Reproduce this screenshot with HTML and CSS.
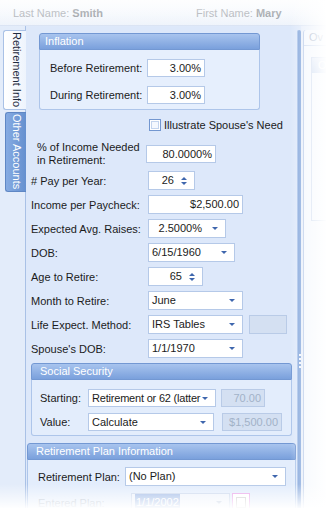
FILE: index.html
```html
<!DOCTYPE HTML>
<html lang="en-us">
	<head>
		<meta charset="utf-8">
		<meta name="viewport" content="initial-scale=1.0">
		<title>Retirement Info</title>
		<link rel="stylesheet" href="styles.css">
	</head>
	<body>
		<div class="screen">

			<header class="names">
				<span class="name last">Last Name: <b>Smith</b></span>
				<span class="name">First Name: <b>Mary</b></span>
			</header>

			<div class="workspace">

				<nav class="tabs">
					<div class="tab active">Retirement Info</div>
					<div class="tab">Other Accounts</div>
				</nav>

				<main class="form">

					<section class="group inflation">
						<h2 class="group-title">Inflation</h2>
						<div class="group-body">
							<div class="row"><label>Before Retirement:</label><div class="field num w58">3.00%</div></div>
							<div class="row"><label>During Retirement:</label><div class="field num w58">3.00%</div></div>
						</div>
					</section>

					<div class="check-row"><span class="check"></span>Illustrate Spouse's Need</div>

					<div class="fields">
						<div class="row pct"><label>% of Income Needed<br>in Retirement:</label><div class="field num w70">80.0000%</div></div>
						<div class="row"><label># Pay per Year:</label><div class="field spinner w47">26<span class="spin"><i class="up"></i><i class="down"></i></span></div></div>
						<div class="row"><label>Income per Paycheck:</label><div class="field num w95">$2,500.00</div></div>
						<div class="row"><label>Expected Avg. Raises:</label><div class="field combo right w78"><span>2.5000%</span></div></div>
						<div class="row"><label>DOB:</label><div class="field combo w87"><span>6/15/1960</span></div></div>
						<div class="row"><label>Age to Retire:</label><div class="field spinner w55">65<span class="spin"><i class="up"></i><i class="down"></i></span></div></div>
						<div class="row"><label>Month to Retire:</label><div class="field combo w95"><span>June</span></div></div>
						<div class="row"><label>Life Expect. Method:</label><div class="field combo w95"><span>IRS Tables</span></div><div class="field off w38"></div></div>
						<div class="row"><label>Spouse's DOB:</label><div class="field combo w95"><span>1/1/1970</span></div></div>
					</div>

					<section class="group social">
						<h2 class="group-title">Social Security</h2>
						<div class="group-body">
							<div class="row"><label>Starting:</label><div class="field combo w128"><span class="tight">Retirement or 62 (latter</span></div><div class="field off num w44">70.00</div></div>
							<div class="row"><label>Value:</label><div class="field combo w126"><span>Calculate</span></div><div class="field off num w60 gap8">$1,500.00</div></div>
						</div>
					</section>

					<section class="group plan">
						<h2 class="group-title">Retirement Plan Information</h2>
						<div class="group-body">
							<div class="row"><label>Retirement Plan:</label><div class="field combo w161"><span>(No Plan)</span></div></div>
							<div class="row disabled"><label>Entered Plan:</label><div class="field combo date w99"><span class="sel">1/1/2002</span></div><div class="cal"></div></div>
						</div>
					</section>

				</main>

				<div class="splitter"><span class="grip"></span></div>

				<aside class="side">
					<div class="side-panel">
						<div class="side-tab">Ov</div>
						<div class="side-box"><div class="side-box-title">O</div></div>
					</div>
				</aside>

			</div>

			<div class="fade fade-top"></div>
			<div class="fade fade-right"></div>
			<div class="fade fade-bottom"></div>
		</div>
	</body>
</html>
```

FILE: styles.css
```css
* {
	box-sizing: border-box;
}

body {
	margin: 0;
	font-family: "Liberation Sans", Arial, sans-serif;
	font-size: 11px;
	color: #1b1b1b;
	background: #dde8fa;
}

.screen {
	position: relative;
	width: 326px;
	height: 508px;
	overflow: hidden;
}

/* top name bar */
.names {
	height: 26px;
	display: flex;
	align-items: center;
	padding-left: 13px;
	color: #a6aab0;
	background: linear-gradient(#fcfdfe, #eef3fb);
	border-bottom: 1px solid #d9e3f3;
}

.names .last {
	width: 183px;
}

.names b {
	color: #93979d;
}

.workspace {
	display: flex;
	height: 482px;
}

/* vertical tabs */
.tabs {
	width: 26px;
	flex: none;
	padding-top: 4px;
	background: #e3ecfa;
	border-right: 1px solid #a9c1e6;
	display: flex;
	flex-direction: column;
	align-items: flex-end;
	gap: 2px;
}

.tab {
	writing-mode: vertical-rl;
	width: 21px;
	height: 80px;
	line-height: 19px;
	text-align: center;
	color: #fff;
	background: linear-gradient(to right, #86abe2, #6590cf);
	border: 1px solid #5f87c4;
	border-right: none;
	border-radius: 3px 0 0 3px;
	margin-right: -1px;
}

.tab.active {
	width: 23px;
	color: #1e2b40;
	background: linear-gradient(to right, #ffffff, #eef4fd);
	border-color: #a9c1e6;
}

/* main form */
.form {
	width: 271px;
	flex: none;
	padding-top: 7px;
}

.group-title {
	margin: 0;
	height: 17px;
	padding-left: 8px;
	font-size: 11px;
	font-weight: normal;
	line-height: 15px;
	color: #fff;
	background: linear-gradient(#a8c4ee, #7aa0dc);
	border: 1px solid #7398d3;
	border-radius: 3px 3px 0 0;
}

.group-body {
	display: flex;
	flex-direction: column;
	background: #e3edfc;
	border: 1px solid #adc5ea;
	border-top: none;
	border-radius: 0 0 3px 3px;
}

.row {
	display: flex;
	align-items: center;
}

.row label {
	flex: none;
}

.field {
	flex: none;
	height: 19px;
	padding: 0 3px;
	line-height: 17px;
	white-space: nowrap;
	overflow: hidden;
	background: #fff;
	border: 1px solid #b5c9e8;
}

.num {
	text-align: right;
}

.combo {
	display: flex;
	align-items: center;
	justify-content: space-between;
	gap: 2px;
	padding-right: 7px;
}

.combo span {
	min-width: 0;
}

.combo .tight {
	letter-spacing: -0.2px;
}

.combo::after {
	content: "";
	flex: none;
	border-left: 3px solid transparent;
	border-right: 3px solid transparent;
	border-top: 3px solid #3e66ad;
}

.combo.right {
	justify-content: flex-end;
	gap: 10px;
}

.spinner {
	display: flex;
	align-items: center;
	justify-content: flex-end;
	gap: 7px;
	padding-right: 7px;
}

.spin {
	display: flex;
	flex-direction: column;
	gap: 2px;
}

.spin i {
	border-left: 3px solid transparent;
	border-right: 3px solid transparent;
}

.spin .up {
	border-bottom: 3px solid #3e66ad;
}

.spin .down {
	border-top: 3px solid #3e66ad;
}

.off {
	color: #a2b2c8;
	background: #d4e0f2;
	border-color: #b9cbe7;
}

.w38 { width: 38px; margin-left: 6px; }
.w44 { width: 44px; margin-left: 5px; }
.w47 { width: 47px; }
.w55 { width: 55px; }
.w58 { width: 58px; height: 18px; }
.w60 { width: 60px; }
.w70 { width: 70px; height: 18px; }
.w78 { width: 78px; }
.w87 { width: 87px; }
.w95 { width: 95px; }
.w99 { width: 99px; margin-left: 6px; }
.w126 { width: 126px; }
.w128 { width: 128px; height: 18px; }
.w161 { width: 161px; }
.gap8 { margin-left: 8px; }

/* inflation */
.inflation {
	width: 221px;
	margin-left: 13px;
}

.inflation .group-title {
	padding-left: 5px;
}

.inflation .group-body {
	padding: 9px 0 5px 10px;
	gap: 9px;
	background: #e6effd;
}

.inflation label {
	width: 97px;
}

.check-row {
	display: flex;
	align-items: center;
	gap: 3px;
	height: 13px;
	margin: 8px 0 0 123px;
}

.check {
	width: 12px;
	height: 12px;
	background: #f4f8fe;
	border: 1px solid #7397d0;
	box-shadow: inset 0 0 0 1px #fff, inset 0 0 0 2px #c3d4ee;
}

.fields {
	display: flex;
	flex-direction: column;
	gap: 5px;
	margin-top: 10px;
	padding-left: 5px;
}

.fields label {
	width: 117px;
}

.fields .pct {
	margin-bottom: -1px;
}

.fields .pct label {
	width: 115px;
	padding-left: 6px;
	line-height: 13px;
}

/* social security */
.social {
	width: 261px;
	margin: 5px 0 0 5px;
}

.social .group-body {
	padding: 9px 0 4px 8px;
	gap: 6px;
}

.social .field {
	height: 18px;
}

.social label {
	width: 48px;
}

/* retirement plan */
.plan {
	width: 269px;
	margin: 7px 0 0 1px;
}

.plan .group-body {
	padding: 7px 0 0 10px;
	gap: 7px;
	height: 60px;
}

.plan label {
	width: 87px;
}

.disabled label {
	color: #a9b6c8;
}

.date {
	background: #eef3fb;
	border-color: #c8d6ec;
}

.date::after {
	border-top-color: #b6c5dc;
}

.sel {
	padding: 0 1px;
	color: #fff;
	background: #9db8e6;
}

.cal {
	width: 18px;
	height: 19px;
	margin-left: 2px;
	background: #fff;
	border: 1px solid #e79ee7;
	box-shadow: inset 0 0 0 3px #fff, inset 0 0 0 4px #c7c7c7;
}

/* splitter and side panel */
.splitter {
	width: 4px;
	flex: none;
	margin-top: 4px;
	display: flex;
	flex-direction: column;
	align-items: center;
	background: #7ea2da;
	border-left: 1px solid #a7c1e8;
	border-radius: 2px 2px 0 0;
}

.grip {
	width: 2px;
	height: 14px;
	margin-top: 324px;
	background: repeating-linear-gradient(#f2f6fd 0 2px, transparent 2px 4px);
}

.side {
	flex: 1;
	padding: 4px 0 0 2px;
	background: #e7eefa;
}

.side-panel {
	height: 100%;
	background: #f3f7fd;
	border-left: 1px solid #b3c7e8;
	border-top-left-radius: 3px;
}

.side-tab {
	height: 16px;
	padding-left: 5px;
	line-height: 15px;
	color: #97a8c2;
	border-bottom: 1px solid #c9d7ee;
}

.side-box {
	height: 164px;
	margin: 11px 0 0 7px;
	border: 1px solid #c6d5ed;
	border-right: none;
}

.side-box-title {
	height: 15px;
	padding-left: 6px;
	line-height: 14px;
	color: #fff;
	background: linear-gradient(#dfe8f8, #c3d4ef);
}

/* white fade round the edges of the shot */
.fade {
	position: absolute;
	pointer-events: none;
}

.fade-top {
	left: 0;
	right: 0;
	top: 0;
	height: 28px;
	background: linear-gradient(rgba(255, 255, 255, .5), rgba(255, 255, 255, 0));
}

.fade-right {
	top: 0;
	bottom: 0;
	right: 0;
	width: 36px;
	background: linear-gradient(to right, rgba(255, 255, 255, 0), rgba(255, 255, 255, .97));
}

.fade-bottom {
	left: 0;
	right: 0;
	bottom: 0;
	height: 24px;
	background: linear-gradient(rgba(255, 255, 255, 0), rgba(255, 255, 255, .95));
}
```
